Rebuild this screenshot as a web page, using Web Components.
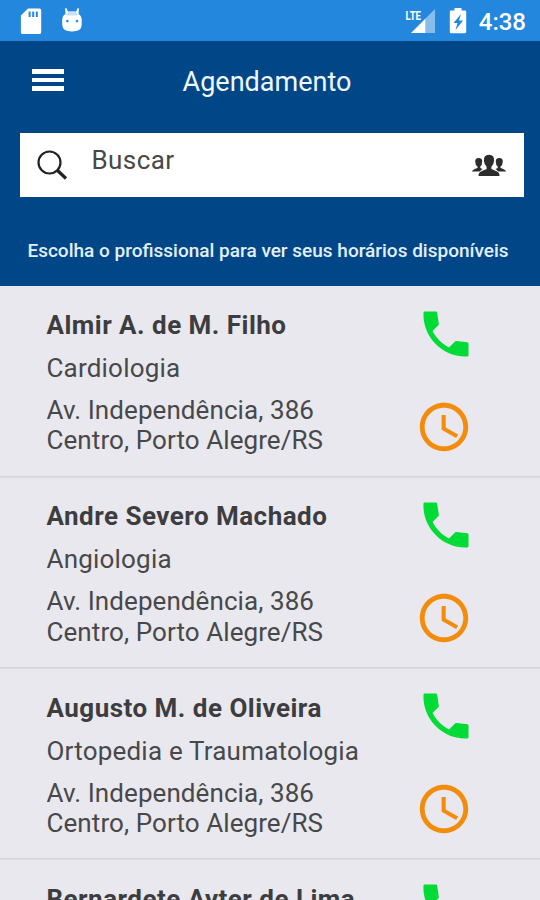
<!DOCTYPE html>
<html lang="pt-BR">
<head>
<meta charset="utf-8">
<meta name="viewport" content="width=device-width, initial-scale=1">
<title>Agendamento</title>
<style>
  html, body {
    margin: 0;
    height: 100%;
    overflow: hidden;
    background: #e9e8ee;
    font-family: Roboto, 'Liberation Sans', sans-serif;
  }
</style>
</head>
<body>
<schedule-app></schedule-app>

<script>
class StatusBar extends HTMLElement {
  connectedCallback() {
    this.attachShadow({ mode: 'open' }).innerHTML = `
      <style>
        :host {
          display: flex;
          align-items: center;
          height: 41px;
          padding: 0 14px 0 20px;
          box-sizing: border-box;
          background: #2387de;
          color: #fff;
        }

        svg {
          display: block;
          fill: #fff;
        }

        .android {
          margin-left: 19px;
        }

        .signal {
          margin-left: auto;
        }

        .battery {
          margin-left: 13px;
        }

        .lte {
          font-size: 13.500px;
          font-weight: 700;
        }

        .clock {
          margin: 2px 0 0 12px;
          font-size: 24px;
          font-weight: 500;
          line-height: 30px;
        }
      </style>
      <svg width="22" height="28" viewBox="0 0 22 28">
        <path fill-rule="evenodd" d="M8 1.500h11.500q1.700 0 1.700 1.700v22q0 1.900-1.900 1.900H2.800q-1.900 0-1.900-1.900V8.500zM8.600 4.500v5.500h2v-5.500zM12.200 4.500v5.500h2v-5.500zM15.800 4.500v5.500h2v-5.500z"/>
      </svg>
      <svg class="android" width="22" height="28" viewBox="0 0 22 28">
        <path fill-opacity=".75" d="M4.100 7q1.500-2.800 4.200-2.800h5.500q2.700 0 4.200 2.800v3H4.100z"/>
        <path d="M4.100 1.500l1.300-.5 1.900 4.500-2.600 2zM18 1.500L16.700 1l-1.900 4.500 2.600 2z"/>
        <path fill-rule="evenodd" d="M4 7.300l2.500 1.200h9L18 7.300q2.700 1.700 2.700 4.700v5.500q0 7-9.700 7t-9.800-7V12q0-3 2.800-4.700zM6.300 12.700a1.300 1.300 0 1 0 .1 0zM16 12.700a1.300 1.300 0 1 0 .1 0z"/>
      </svg>
      <svg class="signal" width="31" height="28" viewBox="0 0 31 28">
        <path fill-opacity=".45" d="M30 2v24h-9.500V11.500z"/>
        <path d="M20.500 11.500V26H6z"/>
        <text class="lte" x="0.500" y="12.500" textLength="15.500" lengthAdjust="spacingAndGlyphs">LTE</text>
      </svg>
      <svg class="battery" width="18" height="28" viewBox="0 0 18 28">
        <path fill-rule="evenodd" d="M5.500 1h7v2.500h3.700q1 0 1 1V25q0 1.300-1.300 1.300H2.100Q.8 26.300.8 25V4.500q0-1 1-1h3.700zM12 7L4.500 16h4l-2 7L14 13.500h-4z"/>
      </svg>
      <span class="clock">4:38</span>
    `;
  }
}

class AppToolbar extends HTMLElement {
  connectedCallback() {
    this.attachShadow({ mode: 'open' }).innerHTML = `
      <style>
        :host {
          display: grid;
          grid-template-columns: 64px 1fr 64px;
          align-items: center;
          height: 80px;
          color: #f0f7ff;
        }

        button {
          display: flex;
          flex-direction: column;
          gap: 4px;
          width: 32px;
          margin: -2px 0 0 32px;
          padding: 0;
          border: 0;
          background: none;
        }

        i {
          height: 4.500px;
          background: #fff;
        }

        h1 {
          margin: 1px 0 0 -6px;
          font-size: 27px;
          font-weight: 400;
          line-height: 36px;
          text-align: center;
        }
      </style>
      <button aria-label="Menu"><i></i><i></i><i></i></button>
      <h1><slot></slot></h1>
    `;
  }
}

class SearchField extends HTMLElement {
  connectedCallback() {
    this.attachShadow({ mode: 'open' }).innerHTML = `
      <style>
        :host {
          display: flex;
          align-items: center;
          height: 64px;
          margin: 12px 16px 0 20px;
          padding: 0 17px 0 16px;
          box-sizing: border-box;
          background: #fff;
          color: #484848;
        }

        svg {
          display: block;
        }

        span {
          flex: 1;
          margin: -10px 0 0 23.500px;
          font-size: 26px;
          line-height: 32px;
          letter-spacing: 0.400px;
        }
      </style>
      <svg width="32" height="32" viewBox="0 0 32 32" fill="none" stroke="#222">
        <circle cx="13.500" cy="13.500" r="11" stroke-width="2.200"/>
        <path stroke-width="3.200" d="M21 21l9 8.500"/>
      </svg>
      <span><slot></slot></span>
      <svg width="36" height="24" viewBox="0 0 36 24" fill="#2c2c2c">
        <path d="M1 18.500q.3-1.800 5.500-3.400v-1.500Q4.200 12 4.200 8.500 4 5 7.700 5q3.800 0 3.500 3.500 0 3.500-1.900 5.100v1.500l2.200.8-3 2.600z"/>
        <path d="M35 18.500q-.3-1.800-5.500-3.400v-1.500q2.300-1.600 2.300-5.100Q32 5 28.300 5q-3.800 0-3.500 3.500 0 3.500 1.900 5.100v1.500l-2.200.8 3 2.600z"/>
        <path d="M7.500 23q0-4 3.500-4.900l4.600-2v-2.400Q13.100 11.500 13 8q-.6-6.200 5-6.200T23 8q-.1 3.500-2.600 5.700v2.400l4.600 2q3.500.9 3.500 4.900z"/>
      </svg>
    `;
  }
}

class DoctorCard extends HTMLElement {
  connectedCallback() {
    this.attachShadow({ mode: 'open' }).innerHTML = `
      <style>
        :host {
          display: flex;
          justify-content: space-between;
          flex: none;
          height: 191.300px;
          padding: 0 64.500px 0 46.500px;
          box-sizing: border-box;
          color: #48484a;
          font-size: 26px;
          line-height: 30px;
          white-space: nowrap;
        }

        :host(:not(:first-child)) {
          box-shadow: 0 -1px #d5d4da, inset 0 1px #dddce2;
        }

        .info {
          display: flex;
          flex-direction: column;
          padding-top: 24.500px;
        }

        .name {
          color: #3d3d3f;
          font-weight: 700;
          letter-spacing: 0.480px;
        }

        .specialty {
          margin-top: 13px;
          letter-spacing: 0.200px;
        }

        .address {
          margin-top: 12px;
          line-height: 30.400px;
          letter-spacing: 0.080px;
          white-space: pre-line;
        }

        .actions {
          display: flex;
          flex-direction: column;
          align-items: flex-end;
          gap: 34px;
          padding-top: 18px;
        }

        svg {
          display: block;
        }

        .schedule {
          margin-right: 2.500px;
        }
      </style>
      <div class="info">
        <div class="name"><slot name="name"></slot></div>
        <div class="specialty"><slot name="specialty"></slot></div>
        <div class="address"><slot name="address"></slot></div>
      </div>
      <div class="actions">
        <svg class="call" width="60" height="60" viewBox="0 0 24 24" fill="#00dc35">
          <path d="M3.400 3H8q.4 0 .45.4l.68 4.600q.05.300-.2.500L6.620 10.790c1.440 2.830 3.760 5.140 6.590 6.590l2.300-2.300q.3-.3.7-.25l4.350.5q.44.050.44.500v4.700q0 .4-.4.440C10.820 21.550 2.450 13.180 3 3.400q0-.4.400-.4z"/>
        </svg>
        <svg class="schedule" width="58" height="58" viewBox="0 0 24 24" fill="#f28c0a">
          <path d="M11.990 2C6.470 2 2 6.480 2 12s4.470 10 9.990 10C17.520 22 22 17.520 22 12S17.520 2 11.990 2zM12 20c-4.420 0-8-3.580-8-8s3.580-8 8-8 8 3.580 8 8-3.580 8-8 8z"/>
          <path d="M12.700 7H11v6.100l6 3.400.85-1.400-5.150-2.900z"/>
        </svg>
      </div>
    `;
  }
}

class ScheduleApp extends HTMLElement {
  connectedCallback() {
    this.attachShadow({ mode: 'open' }).innerHTML = `
      <style>
        :host {
          display: flex;
          flex-direction: column;
          height: 100vh;
          overflow: hidden;
        }

        header {
          flex: none;
          height: 244.500px;
          background: #014788;
        }

        p {
          margin: 39.500px 0 0;
          padding-right: 4px;
          color: #e3effa;
          font-size: 19px;
          font-weight: 500;
          line-height: 28px;
          text-align: center;
          white-space: nowrap;
        }

        main {
          display: flex;
          flex-direction: column;
          flex: 1;
          min-height: 0;
          overflow: hidden;
        }
      </style>
      <status-bar></status-bar>
      <header>
        <app-toolbar>Agendamento</app-toolbar>
        <search-field>Buscar</search-field>
        <p>Escolha o profissional para ver seus horários disponíveis</p>
      </header>
      <main></main>
    `;

    const address = 'Av. Independência, 386\nCentro, Porto Alegre/RS';
    const doctors = [
      ['Almir A. de M. Filho', 'Cardiologia'],
      ['Andre Severo Machado', 'Angiologia'],
      ['Augusto M. de Oliveira', 'Ortopedia e Traumatologia'],
      ['Bernardete Ayter de Lima', '']
    ];

    const list = this.shadowRoot.querySelector('main');
    doctors.forEach(([name, specialty]) => {
      const card = document.createElement('doctor-card');
      card.innerHTML = `<span slot="name">${name}</span>`;
      if (specialty) {
        card.innerHTML += `
          <span slot="specialty">${specialty}</span>
          <span slot="address">${address}</span>
        `;
      }
      list.appendChild(card);
    });
  }
}

customElements.define('status-bar', StatusBar);
customElements.define('app-toolbar', AppToolbar);
customElements.define('search-field', SearchField);
customElements.define('doctor-card', DoctorCard);
customElements.define('schedule-app', ScheduleApp);
</script>
</body>
</html>
